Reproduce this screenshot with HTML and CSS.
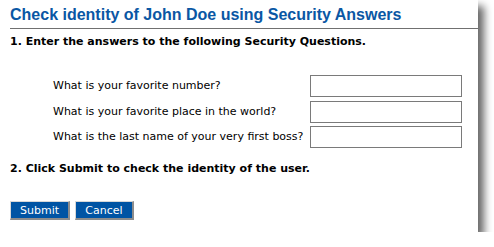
FILE: index.html
```html
<!DOCTYPE html>
<html lang="en">
<head>
    <meta charset="UTF-8">
    <title>Check identity</title>
    <link rel="stylesheet" href="styles.css">
</head>
<body>
    <div class="panel">
        <h1 class="title">Check identity of John Doe using Security Answers</h1>
        <div class="step">1. Enter the answers to the following Security Questions.</div>
        <div class="questions">
            <label for="q1">What is your favorite number?</label>
            <input id="q1" type="text">
            <label for="q2">What is your favorite place in the world?</label>
            <input id="q2" type="text">
            <label for="q3">What is the last name of your very first boss?</label>
            <input id="q3" type="text">
        </div>
        <div class="step">2. Click Submit to check the identity of the user.</div>
        <div class="buttons">
            <button class="btn" type="button">Submit</button>
            <button class="btn" type="button">Cancel</button>
        </div>
    </div>
</body>
</html>
```

FILE: styles.css
```css
* {
    margin: 0;
    padding: 0;
    box-sizing: border-box;
}

body {
    background: #fff;
    font-family: "DejaVu Sans", Verdana, sans-serif;
    color: #000;
}

.panel {
    width: 478px;
    height: 232px;
    background: #fff;
    padding-left: 10px;
    box-shadow: 6px 6px 8px rgba(0, 0, 0, 0.6);
}

.title {
    font-family: "Liberation Sans", Arial, sans-serif;
    font-size: 16px;
    font-weight: bold;
    line-height: 20px;
    color: #0a57a4;
    padding-top: 5px;
    padding-bottom: 3px;
    border-bottom: 1px solid #707070;
}

.step {
    font-size: 11px;
    font-weight: bold;
    line-height: 14px;
    margin-top: 6px;
}

.questions {
    display: grid;
    grid-template-columns: 257px 152px;
    row-gap: 3.5px;
    margin: 26px 0 14px 43px;
    align-items: center;
}

.questions label {
    font-size: 11px;
    line-height: 14px;
}

.questions input {
    height: 22px;
    border: 1px solid #7a7a7a;
    background: #fff;
}

.buttons {
    display: flex;
    gap: 5px;
    margin-top: 25px;
}

.btn {
    width: 60px;
    height: 19px;
    background: #0054a4;
    color: #fff;
    font-family: "DejaVu Sans", Verdana, sans-serif;
    font-size: 11px;
    border-style: solid;
    border-width: 1px 2px 2px 1px;
    border-color: #d8d8d8 #8c8c8c #8c8c8c #d8d8d8;
}

.btn + .btn {
    width: 59px;
}
```
